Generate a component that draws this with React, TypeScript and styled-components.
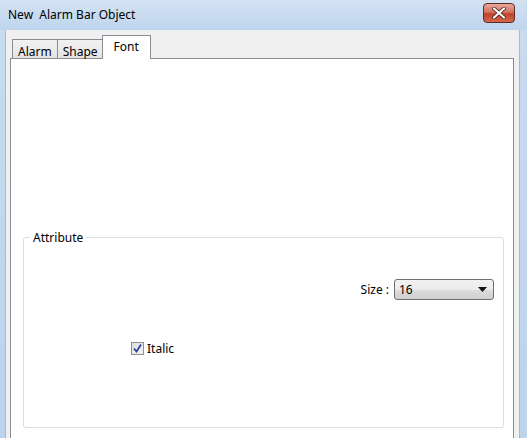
import styled, { createGlobalStyle } from "styled-components";

const GlobalStyle = createGlobalStyle`
    html, body {
        margin: 0;
        padding: 0;
        width: 527px;
        height: 438px;
        overflow: hidden;
        font-family: "Noto Sans", "DejaVu Sans", sans-serif;
    }
`;

export default function App() {
    return (
        <>
            <GlobalStyle />
            <Window>
                <TitleBar>
                    <Title>New&nbsp; Alarm Bar Object</Title>
                    <CloseButton>
                        <svg width="14" height="12" viewBox="0 0 14 12">
                            <path d="M2 1.5 L12 10.5 M12 1.5 L2 10.5" stroke="#3a1a14" strokeWidth="3.6" strokeLinecap="round" />
                            <path d="M2 1.5 L12 10.5 M12 1.5 L2 10.5" stroke="#fff" strokeWidth="2.2" strokeLinecap="round" />
                        </svg>
                    </CloseButton>
                </TitleBar>
                <Body>
                    <TabStrip>
                        <Tab>Alarm</Tab>
                        <Tab>Shape</Tab>
                        <Tab $active>Font</Tab>
                    </TabStrip>
                    <Panel>
                        <Group>
                            <GroupLabel>Attribute</GroupLabel>
                            <SizeRow>
                                <FieldLabel>Size :</FieldLabel>
                                <Select>
                                    <span>16</span>
                                    <svg width="9" height="5" viewBox="0 0 9 5">
                                        <path d="M0 0 H9 L4.5 5 Z" fill="#111" />
                                    </svg>
                                </Select>
                            </SizeRow>
                            <CheckRow>
                                <CheckBox>
                                    <svg width="11" height="11" viewBox="0 0 11 11">
                                        <path d="M2 5.5 L4.5 8.5 L9 1.5" stroke="#2c3f9a" strokeWidth="1.8" fill="none" />
                                    </svg>
                                </CheckBox>
                                <FieldLabel>Italic</FieldLabel>
                            </CheckRow>
                        </Group>
                    </Panel>
                </Body>
            </Window>
        </>
    );
}

const Window = styled.div`
    width: 527px;
    height: 438px;
    display: flex;
    flex-direction: column;
    background: linear-gradient(to bottom, #c9dcf0, #bcd3ec);
    border-right: 1px solid #c3d6ea;
    box-sizing: border-box;
`;

const TitleBar = styled.div`
    height: 30px;
    flex-shrink: 0;
    display: flex;
    align-items: center;
    justify-content: space-between;
    padding: 0 11px 2px 8px;
    box-sizing: border-box;
    background: linear-gradient(to bottom, #d3e2f3, #bed5ed);
`;

const Title = styled.span`
    font-size: 12px;
    color: #000;
    padding-top: 1px;
`;

const CloseButton = styled.div`
    width: 32px;
    height: 20px;
    margin-top: -2px;
    border-radius: 4px;
    border: 1px solid #5e2a22;
    background: linear-gradient(to bottom, #e9a99b 0%, #d2745f 45%, #c0432a 55%, #d4674e 100%);
    display: flex;
    align-items: center;
    justify-content: center;
    box-sizing: border-box;
`;

const Body = styled.div`
    flex: 1;
    margin: 0 6px 0 5px;
    background: #f0f0f0;
    border-left: 1px solid #a9b9cc;
    border-right: 1px solid #a9b9cc;
    padding: 5px 5px 0 4px;
    display: flex;
    flex-direction: column;
    min-height: 0;
`;

const TabStrip = styled.div`
    display: flex;
    align-items: flex-end;
    height: 24px;
    padding-left: 2px;
    position: relative;
    z-index: 1;
    margin-bottom: -1px;
`;

const Tab = styled.div<{ $active?: boolean }>`
    height: ${(p) => (p.$active ? "24px" : "20px")};
    padding: ${(p) => (p.$active ? "3px 11px 0" : "4px 5px 0")};
    margin-left: ${(p) => (p.$active ? "-1px" : "0")};
    box-sizing: border-box;
    font-size: 12px;
    color: #000;
    border: 1px solid #898c95;
    border-bottom: ${(p) => (p.$active ? "none" : "1px solid #898c95")};
    margin-right: -1px;
    background: ${(p) => (p.$active ? "#fff" : "linear-gradient(to bottom, #f2f2f2, #e4e4e4)")};
    line-height: 15px;
`;

const Panel = styled.div`
    flex: 1;
    background: #fff;
    border: 1px solid #898c95;
    border-bottom: none;
    padding: 178px 9px 0 12px;
    box-sizing: border-box;
`;

const Group = styled.div`
    position: relative;
    height: 191px;
    border: 1px solid #d5dfe5;
    border-radius: 3px;
    box-sizing: border-box;
    padding: 41px 9px 0 0;
    display: flex;
    flex-direction: column;
`;

const GroupLabel = styled.span`
    position: absolute;
    top: -8px;
    left: 6px;
    padding: 0 3px;
    background: #fff;
    font-size: 12px;
    line-height: 15px;
    color: #000;
`;

const SizeRow = styled.div`
    display: flex;
    align-items: center;
    justify-content: flex-end;
    gap: 5px;
`;

const FieldLabel = styled.span`
    font-size: 12px;
    color: #000;
`;

const Select = styled.div`
    width: 100px;
    height: 21px;
    box-sizing: border-box;
    border: 1px solid #707070;
    border-radius: 3px;
    background: linear-gradient(to bottom, #f2f2f2 0%, #ebebeb 50%, #dddddd 51%, #cfcfcf 100%);
    display: flex;
    align-items: center;
    justify-content: space-between;
    padding: 0 6px 0 4px;
    font-size: 12px;
    color: #000;
`;

const CheckRow = styled.div`
    display: flex;
    align-items: center;
    gap: 3px;
    margin: 40px 0 0 107px;
`;

const CheckBox = styled.div`
    width: 13px;
    height: 13px;
    box-sizing: border-box;
    border: 1px solid #8f8f8f;
    background: linear-gradient(to bottom right, #dcdcdc, #f6f6f6);
    display: flex;
    align-items: center;
    justify-content: center;
`;
